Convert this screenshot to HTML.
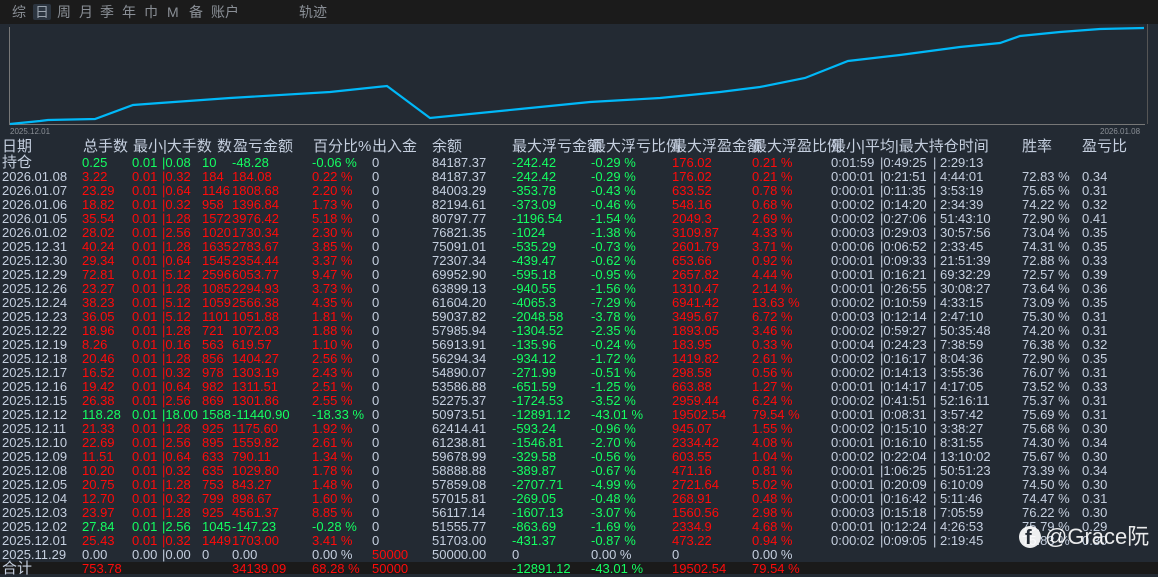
<!DOCTYPE html>
<html><head><meta charset="utf-8"><style>
*{margin:0;padding:0;box-sizing:border-box}
body{width:1158px;height:574px;background:#232a33;overflow:hidden;position:relative;font-family:"Liberation Sans","Noto Sans CJK SC",sans-serif;color:#c5cfdf}
#top{position:absolute;left:0;top:0;width:1158px;height:24px;background:#1b1b1b}
.tab{position:absolute;top:4px;font-size:14px;color:#8a8f96;line-height:16px}
.sel{background:#2c3540;color:#9aa3ad;padding:0 2px;border-radius:2px}
.hd{position:absolute;top:139px;height:16px;font-size:15px;line-height:16px;white-space:nowrap;color:#c5cfdf}
.r{position:absolute;left:0;width:1158px;height:14px;font-size:13px;line-height:14px}
.r span{position:absolute;white-space:pre}
.a{left:2px}.b{left:82px}.c{left:132px}.d{left:162px}.e{left:202px}.f{left:232px}.g{left:312px}.h{left:372px}.i{left:432px}
.j{left:512px}.k{left:591px}.l{left:672px}.m{left:752px}.n{left:831px}.o{left:880px}.p{left:933px}.q{left:1022px}.s{left:1082px}
.R{color:#ff0a0a}.G{color:#14ff62}
.r .b,.r .c,.r .d,.r .e,.r .f,.r .g{color:#ff0a0a}
.r.gr .b,.r.gr .c,.r.gr .d,.r.gr .e,.r.gr .f,.r.gr .g{color:#14ff62}
.r .j,.r .k{color:#14ff62}.r .l,.r .m{color:#ff0a0a}
#tot{position:absolute;left:0;top:562px;width:1158px;height:12px;background:#1a1a1a}
</style></head><body>
<div id="top"></div>
<div class="tab" style="left:12px">综</div>
<div class="tab sel" style="left:33px">日</div>
<div class="tab" style="left:57px">周</div>
<div class="tab" style="left:79px">月</div>
<div class="tab" style="left:100px">季</div>
<div class="tab" style="left:122px">年</div>
<div class="tab" style="left:144px">巾</div>
<div class="tab" style="left:167px">M</div>
<div class="tab" style="left:189px">备</div>
<div class="tab" style="left:211px">账户</div>
<div class="tab" style="left:299px">轨迹</div>
<svg style="position:absolute;left:0;top:0" width="1158" height="140">
<line x1="9.5" y1="27" x2="9.5" y2="124" stroke="#777" stroke-width="1"/>
<line x1="9" y1="124.5" x2="1145" y2="124.5" stroke="#777" stroke-width="1"/>
<line x1="1147.5" y1="24" x2="1147.5" y2="124" stroke="#555" stroke-width="1"/>
<polyline fill="none" stroke="#00b8f8" stroke-width="2.2" points="10,124 40,121 48,120 95,119 133,105 160,103 230,98 330,92 387,86 430,118 520,109 590,102 660,98 720,92 760,87 805,78 848,61 900,55 960,47 1000,43 1020,36 1060,32 1100,29 1144,28"/>
<text x="10" y="134" font-size="8" fill="#8a8f96" font-family="Liberation Sans">2025.12.01</text>
<text x="1100" y="134" font-size="8" fill="#8a8f96" font-family="Liberation Sans">2026.01.08</text>
</svg>
<div class="hd" style="left:2px">日期</div>
<div class="hd" style="left:83px">总手数</div>
<div class="hd" style="left:133px">最小|大手数</div>
<div class="hd" style="left:217px">数</div>
<div class="hd" style="left:233px">盈亏金额</div>
<div class="hd" style="left:313px">百分比%</div>
<div class="hd" style="left:372px">出入金</div>
<div class="hd" style="left:432px">余额</div>
<div class="hd" style="left:512px">最大浮亏金额</div>
<div class="hd" style="left:591px">最大浮亏比例</div>
<div class="hd" style="left:672px">最大浮盈金额</div>
<div class="hd" style="left:752px">最大浮盈比例</div>
<div class="hd" style="left:831px">最小|平均|最大持仓时间</div>
<div class="hd" style="left:1022px">胜率</div>
<div class="hd" style="left:1082px">盈亏比</div>

<div class="r gr" style="top:156px"><span class="a" style="font-size:15px">持仓</span><span class="b">0.25</span><span class="c">0.01</span><span class="d">|0.08</span><span class="e">10</span><span class="f">-48.28</span><span class="g">-0.06 %</span><span class="h">0</span><span class="i">84187.37</span><span class="j">-242.42</span><span class="k">-0.29 %</span><span class="l">176.02</span><span class="m">0.21 %</span><span class="n">0:01:59</span><span class="o">|0:49:25</span><span class="p">| 2:29:13</span></div>
<div class="r" style="top:170px"><span class="a">2026.01.08</span><span class="b">3.22</span><span class="c">0.01</span><span class="d">|0.32</span><span class="e">184</span><span class="f">184.08</span><span class="g">0.22 %</span><span class="h">0</span><span class="i">84187.37</span><span class="j">-242.42</span><span class="k">-0.29 %</span><span class="l">176.02</span><span class="m">0.21 %</span><span class="n">0:00:01</span><span class="o">|0:21:51</span><span class="p">| 4:44:01</span><span class="q">72.83 %</span><span class="s">0.34</span></div>
<div class="r" style="top:184px"><span class="a">2026.01.07</span><span class="b">23.29</span><span class="c">0.01</span><span class="d">|0.64</span><span class="e">1146</span><span class="f">1808.68</span><span class="g">2.20 %</span><span class="h">0</span><span class="i">84003.29</span><span class="j">-353.78</span><span class="k">-0.43 %</span><span class="l">633.52</span><span class="m">0.78 %</span><span class="n">0:00:01</span><span class="o">|0:11:35</span><span class="p">| 3:53:19</span><span class="q">75.65 %</span><span class="s">0.31</span></div>
<div class="r" style="top:198px"><span class="a">2026.01.06</span><span class="b">18.82</span><span class="c">0.01</span><span class="d">|0.32</span><span class="e">958</span><span class="f">1396.84</span><span class="g">1.73 %</span><span class="h">0</span><span class="i">82194.61</span><span class="j">-373.09</span><span class="k">-0.46 %</span><span class="l">548.16</span><span class="m">0.68 %</span><span class="n">0:00:02</span><span class="o">|0:14:20</span><span class="p">| 2:34:39</span><span class="q">74.22 %</span><span class="s">0.32</span></div>
<div class="r" style="top:212px"><span class="a">2026.01.05</span><span class="b">35.54</span><span class="c">0.01</span><span class="d">|1.28</span><span class="e">1572</span><span class="f">3976.42</span><span class="g">5.18 %</span><span class="h">0</span><span class="i">80797.77</span><span class="j">-1196.54</span><span class="k">-1.54 %</span><span class="l">2049.3</span><span class="m">2.69 %</span><span class="n">0:00:02</span><span class="o">|0:27:06</span><span class="p">| 51:43:10</span><span class="q">72.90 %</span><span class="s">0.41</span></div>
<div class="r" style="top:226px"><span class="a">2026.01.02</span><span class="b">28.02</span><span class="c">0.01</span><span class="d">|2.56</span><span class="e">1020</span><span class="f">1730.34</span><span class="g">2.30 %</span><span class="h">0</span><span class="i">76821.35</span><span class="j">-1024</span><span class="k">-1.38 %</span><span class="l">3109.87</span><span class="m">4.33 %</span><span class="n">0:00:03</span><span class="o">|0:29:03</span><span class="p">| 30:57:56</span><span class="q">73.04 %</span><span class="s">0.35</span></div>
<div class="r" style="top:240px"><span class="a">2025.12.31</span><span class="b">40.24</span><span class="c">0.01</span><span class="d">|1.28</span><span class="e">1635</span><span class="f">2783.67</span><span class="g">3.85 %</span><span class="h">0</span><span class="i">75091.01</span><span class="j">-535.29</span><span class="k">-0.73 %</span><span class="l">2601.79</span><span class="m">3.71 %</span><span class="n">0:00:06</span><span class="o">|0:06:52</span><span class="p">| 2:33:45</span><span class="q">74.31 %</span><span class="s">0.35</span></div>
<div class="r" style="top:254px"><span class="a">2025.12.30</span><span class="b">29.34</span><span class="c">0.01</span><span class="d">|0.64</span><span class="e">1545</span><span class="f">2354.44</span><span class="g">3.37 %</span><span class="h">0</span><span class="i">72307.34</span><span class="j">-439.47</span><span class="k">-0.62 %</span><span class="l">653.66</span><span class="m">0.92 %</span><span class="n">0:00:01</span><span class="o">|0:09:33</span><span class="p">| 21:51:39</span><span class="q">72.88 %</span><span class="s">0.33</span></div>
<div class="r" style="top:268px"><span class="a">2025.12.29</span><span class="b">72.81</span><span class="c">0.01</span><span class="d">|5.12</span><span class="e">2596</span><span class="f">6053.77</span><span class="g">9.47 %</span><span class="h">0</span><span class="i">69952.90</span><span class="j">-595.18</span><span class="k">-0.95 %</span><span class="l">2657.82</span><span class="m">4.44 %</span><span class="n">0:00:01</span><span class="o">|0:16:21</span><span class="p">| 69:32:29</span><span class="q">72.57 %</span><span class="s">0.39</span></div>
<div class="r" style="top:282px"><span class="a">2025.12.26</span><span class="b">23.27</span><span class="c">0.01</span><span class="d">|1.28</span><span class="e">1085</span><span class="f">2294.93</span><span class="g">3.73 %</span><span class="h">0</span><span class="i">63899.13</span><span class="j">-940.55</span><span class="k">-1.56 %</span><span class="l">1310.47</span><span class="m">2.14 %</span><span class="n">0:00:01</span><span class="o">|0:26:55</span><span class="p">| 30:08:27</span><span class="q">73.64 %</span><span class="s">0.36</span></div>
<div class="r" style="top:296px"><span class="a">2025.12.24</span><span class="b">38.23</span><span class="c">0.01</span><span class="d">|5.12</span><span class="e">1059</span><span class="f">2566.38</span><span class="g">4.35 %</span><span class="h">0</span><span class="i">61604.20</span><span class="j">-4065.3</span><span class="k">-7.29 %</span><span class="l">6941.42</span><span class="m">13.63 %</span><span class="n">0:00:02</span><span class="o">|0:10:59</span><span class="p">| 4:33:15</span><span class="q">73.09 %</span><span class="s">0.35</span></div>
<div class="r" style="top:310px"><span class="a">2025.12.23</span><span class="b">36.05</span><span class="c">0.01</span><span class="d">|5.12</span><span class="e">1101</span><span class="f">1051.88</span><span class="g">1.81 %</span><span class="h">0</span><span class="i">59037.82</span><span class="j">-2048.58</span><span class="k">-3.78 %</span><span class="l">3495.67</span><span class="m">6.72 %</span><span class="n">0:00:03</span><span class="o">|0:12:14</span><span class="p">| 2:47:10</span><span class="q">75.30 %</span><span class="s">0.31</span></div>
<div class="r" style="top:324px"><span class="a">2025.12.22</span><span class="b">18.96</span><span class="c">0.01</span><span class="d">|1.28</span><span class="e">721</span><span class="f">1072.03</span><span class="g">1.88 %</span><span class="h">0</span><span class="i">57985.94</span><span class="j">-1304.52</span><span class="k">-2.35 %</span><span class="l">1893.05</span><span class="m">3.46 %</span><span class="n">0:00:02</span><span class="o">|0:59:27</span><span class="p">| 50:35:48</span><span class="q">74.20 %</span><span class="s">0.31</span></div>
<div class="r" style="top:338px"><span class="a">2025.12.19</span><span class="b">8.26</span><span class="c">0.01</span><span class="d">|0.16</span><span class="e">563</span><span class="f">619.57</span><span class="g">1.10 %</span><span class="h">0</span><span class="i">56913.91</span><span class="j">-135.96</span><span class="k">-0.24 %</span><span class="l">183.95</span><span class="m">0.33 %</span><span class="n">0:00:04</span><span class="o">|0:24:23</span><span class="p">| 7:38:59</span><span class="q">76.38 %</span><span class="s">0.32</span></div>
<div class="r" style="top:352px"><span class="a">2025.12.18</span><span class="b">20.46</span><span class="c">0.01</span><span class="d">|1.28</span><span class="e">856</span><span class="f">1404.27</span><span class="g">2.56 %</span><span class="h">0</span><span class="i">56294.34</span><span class="j">-934.12</span><span class="k">-1.72 %</span><span class="l">1419.82</span><span class="m">2.61 %</span><span class="n">0:00:02</span><span class="o">|0:16:17</span><span class="p">| 8:04:36</span><span class="q">72.90 %</span><span class="s">0.35</span></div>
<div class="r" style="top:366px"><span class="a">2025.12.17</span><span class="b">16.52</span><span class="c">0.01</span><span class="d">|0.32</span><span class="e">978</span><span class="f">1303.19</span><span class="g">2.43 %</span><span class="h">0</span><span class="i">54890.07</span><span class="j">-271.99</span><span class="k">-0.51 %</span><span class="l">298.58</span><span class="m">0.56 %</span><span class="n">0:00:02</span><span class="o">|0:14:13</span><span class="p">| 3:55:36</span><span class="q">76.07 %</span><span class="s">0.31</span></div>
<div class="r" style="top:380px"><span class="a">2025.12.16</span><span class="b">19.42</span><span class="c">0.01</span><span class="d">|0.64</span><span class="e">982</span><span class="f">1311.51</span><span class="g">2.51 %</span><span class="h">0</span><span class="i">53586.88</span><span class="j">-651.59</span><span class="k">-1.25 %</span><span class="l">663.88</span><span class="m">1.27 %</span><span class="n">0:00:01</span><span class="o">|0:14:17</span><span class="p">| 4:17:05</span><span class="q">73.52 %</span><span class="s">0.33</span></div>
<div class="r" style="top:394px"><span class="a">2025.12.15</span><span class="b">26.38</span><span class="c">0.01</span><span class="d">|2.56</span><span class="e">869</span><span class="f">1301.86</span><span class="g">2.55 %</span><span class="h">0</span><span class="i">52275.37</span><span class="j">-1724.53</span><span class="k">-3.52 %</span><span class="l">2959.44</span><span class="m">6.24 %</span><span class="n">0:00:02</span><span class="o">|0:41:51</span><span class="p">| 52:16:11</span><span class="q">75.37 %</span><span class="s">0.31</span></div>
<div class="r gr" style="top:408px"><span class="a">2025.12.12</span><span class="b">118.28</span><span class="c">0.01</span><span class="d">|18.00</span><span class="e">1588</span><span class="f">-11440.90</span><span class="g">-18.33 %</span><span class="h">0</span><span class="i">50973.51</span><span class="j">-12891.12</span><span class="k">-43.01 %</span><span class="l">19502.54</span><span class="m">79.54 %</span><span class="n">0:00:01</span><span class="o">|0:08:31</span><span class="p">| 3:57:42</span><span class="q">75.69 %</span><span class="s">0.31</span></div>
<div class="r" style="top:422px"><span class="a">2025.12.11</span><span class="b">21.33</span><span class="c">0.01</span><span class="d">|1.28</span><span class="e">925</span><span class="f">1175.60</span><span class="g">1.92 %</span><span class="h">0</span><span class="i">62414.41</span><span class="j">-593.24</span><span class="k">-0.96 %</span><span class="l">945.07</span><span class="m">1.55 %</span><span class="n">0:00:02</span><span class="o">|0:15:10</span><span class="p">| 3:38:27</span><span class="q">75.68 %</span><span class="s">0.30</span></div>
<div class="r" style="top:436px"><span class="a">2025.12.10</span><span class="b">22.69</span><span class="c">0.01</span><span class="d">|2.56</span><span class="e">895</span><span class="f">1559.82</span><span class="g">2.61 %</span><span class="h">0</span><span class="i">61238.81</span><span class="j">-1546.81</span><span class="k">-2.70 %</span><span class="l">2334.42</span><span class="m">4.08 %</span><span class="n">0:00:01</span><span class="o">|0:16:10</span><span class="p">| 8:31:55</span><span class="q">74.30 %</span><span class="s">0.34</span></div>
<div class="r" style="top:450px"><span class="a">2025.12.09</span><span class="b">11.51</span><span class="c">0.01</span><span class="d">|0.64</span><span class="e">633</span><span class="f">790.11</span><span class="g">1.34 %</span><span class="h">0</span><span class="i">59678.99</span><span class="j">-329.58</span><span class="k">-0.56 %</span><span class="l">603.55</span><span class="m">1.04 %</span><span class="n">0:00:02</span><span class="o">|0:22:04</span><span class="p">| 13:10:02</span><span class="q">75.67 %</span><span class="s">0.30</span></div>
<div class="r" style="top:464px"><span class="a">2025.12.08</span><span class="b">10.20</span><span class="c">0.01</span><span class="d">|0.32</span><span class="e">635</span><span class="f">1029.80</span><span class="g">1.78 %</span><span class="h">0</span><span class="i">58888.88</span><span class="j">-389.87</span><span class="k">-0.67 %</span><span class="l">471.16</span><span class="m">0.81 %</span><span class="n">0:00:01</span><span class="o">|1:06:25</span><span class="p">| 50:51:23</span><span class="q">73.39 %</span><span class="s">0.34</span></div>
<div class="r" style="top:478px"><span class="a">2025.12.05</span><span class="b">20.75</span><span class="c">0.01</span><span class="d">|1.28</span><span class="e">753</span><span class="f">843.27</span><span class="g">1.48 %</span><span class="h">0</span><span class="i">57859.08</span><span class="j">-2707.71</span><span class="k">-4.99 %</span><span class="l">2721.64</span><span class="m">5.02 %</span><span class="n">0:00:01</span><span class="o">|0:20:09</span><span class="p">| 6:10:09</span><span class="q">74.50 %</span><span class="s">0.30</span></div>
<div class="r" style="top:492px"><span class="a">2025.12.04</span><span class="b">12.70</span><span class="c">0.01</span><span class="d">|0.32</span><span class="e">799</span><span class="f">898.67</span><span class="g">1.60 %</span><span class="h">0</span><span class="i">57015.81</span><span class="j">-269.05</span><span class="k">-0.48 %</span><span class="l">268.91</span><span class="m">0.48 %</span><span class="n">0:00:01</span><span class="o">|0:16:42</span><span class="p">| 5:11:46</span><span class="q">74.47 %</span><span class="s">0.31</span></div>
<div class="r" style="top:506px"><span class="a">2025.12.03</span><span class="b">23.97</span><span class="c">0.01</span><span class="d">|1.28</span><span class="e">925</span><span class="f">4561.37</span><span class="g">8.85 %</span><span class="h">0</span><span class="i">56117.14</span><span class="j">-1607.13</span><span class="k">-3.07 %</span><span class="l">1560.56</span><span class="m">2.98 %</span><span class="n">0:00:03</span><span class="o">|0:15:18</span><span class="p">| 7:05:59</span><span class="q">76.22 %</span><span class="s">0.30</span></div>
<div class="r gr" style="top:520px"><span class="a">2025.12.02</span><span class="b">27.84</span><span class="c">0.01</span><span class="d">|2.56</span><span class="e">1045</span><span class="f">-147.23</span><span class="g">-0.28 %</span><span class="h">0</span><span class="i">51555.77</span><span class="j">-863.69</span><span class="k">-1.69 %</span><span class="l">2334.9</span><span class="m">4.68 %</span><span class="n">0:00:01</span><span class="o">|0:12:24</span><span class="p">| 4:26:53</span><span class="q">75.79 %</span><span class="s">0.29</span></div>
<div class="r" style="top:534px"><span class="a">2025.12.01</span><span class="b">25.43</span><span class="c">0.01</span><span class="d">|0.32</span><span class="e">1449</span><span class="f">1703.00</span><span class="g">3.41 %</span><span class="h">0</span><span class="i">51703.00</span><span class="j">-431.37</span><span class="k">-0.87 %</span><span class="l">473.22</span><span class="m">0.94 %</span><span class="n">0:00:02</span><span class="o">|0:09:05</span><span class="p">| 2:19:45</span><span class="q">75.83 %</span><span class="s">0.30</span></div>
<div class="r" style="top:548px"><span class="a">2025.11.29</span><span class="b" style="color:#c5cfdf">0.00</span><span class="c" style="color:#c5cfdf">0.00</span><span class="d" style="color:#c5cfdf">|0.00</span><span class="e" style="color:#c5cfdf">0</span><span class="f" style="color:#c5cfdf">0.00</span><span class="g" style="color:#c5cfdf">0.00 %</span><span class="h R">50000</span><span class="i">50000.00</span><span class="j" style="color:#c5cfdf">0</span><span class="k" style="color:#c5cfdf">0.00 %</span><span class="l" style="color:#c5cfdf">0</span><span class="m" style="color:#c5cfdf">0.00 %</span></div>
<div id="tot"></div>
<div class="r" style="top:562px"><span class="a" style="font-size:15px">合计</span><span class="b">753.78</span><span class="f">34139.09</span><span class="g">68.28 %</span><span class="h R">50000</span><span class="j">-12891.12</span><span class="k">-43.01 %</span><span class="l">19502.54</span><span class="m">79.54 %</span></div>

<div style="position:absolute;left:1019px;top:526px;width:22px;height:22px;border-radius:50%;background:rgba(255,255,255,0.92)">
<span style="position:absolute;left:6px;top:1px;font-size:20px;font-weight:bold;color:#232a33;line-height:22px">f</span></div>
<div style="position:absolute;left:1045px;top:524px;font-size:22px;color:rgba(255,255,255,0.9);line-height:26px;white-space:nowrap">@Grace阮</div>
</body></html>
